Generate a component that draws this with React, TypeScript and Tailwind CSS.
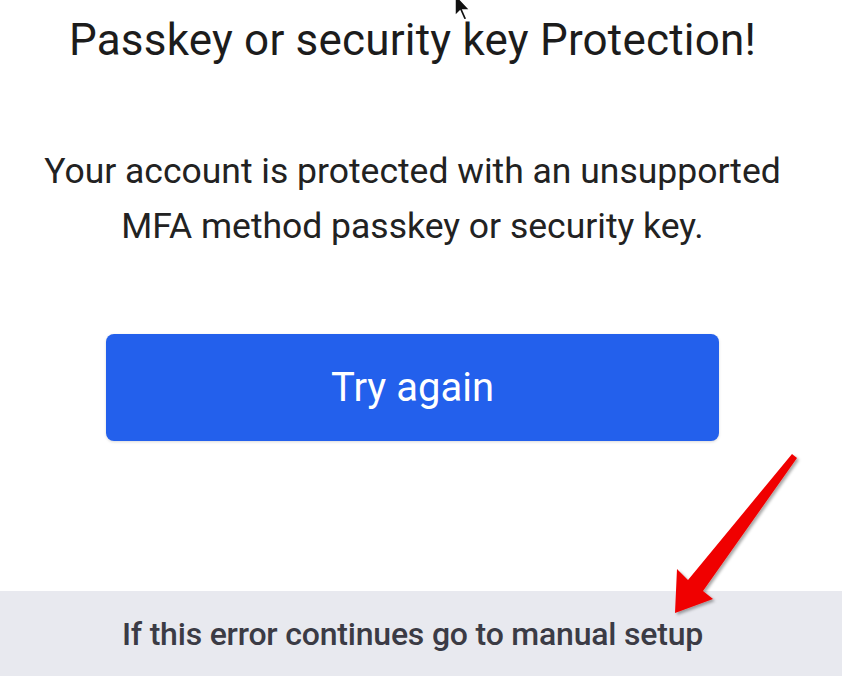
export default function App() {
  return (
    <div
      className="relative w-[842px] h-[676px] overflow-hidden bg-white flex flex-col"
      style={{ fontFamily: 'Roboto, "Liberation Sans", sans-serif' }}
    >
      <div className="flex-1 flex flex-col items-center pr-[17px]">
        <h1 className="mt-[12px] text-[44px] leading-[56px] text-[#1c1c1c] tracking-[0.2px]">
          Passkey or security key Protection!
        </h1>
        <p className="mt-[76px] text-center text-[35.5px] leading-[55px] text-[#222]">
          Your account is protected with an unsupported
          <br />
          MFA method passkey or security key.
        </p>
        <button className="mt-[80px] w-[613px] h-[107px] rounded-[8px] bg-[#2360ec] text-white text-[40px] shadow-[0_1px_3px_rgba(0,0,0,0.15)]">
          Try again
        </button>
      </div>
      <div className="h-[85px] bg-[#e8e9ef] flex items-center justify-center pr-[17px]">
        <span className="text-[32px] font-medium text-[#3b3b45] tracking-[-0.2px]">
          If this error continues go to manual setup
        </span>
      </div>

      {/* mouse cursor */}
      <svg className="absolute left-[452px] top-[-8px]" width="24" height="34" viewBox="0 0 24 34">
        <path d="M3 2 L3 24 L8 19 L12 28 L15 27 L11 18 L18 18 Z" fill="#111" stroke="#fff" strokeWidth="1.5" />
      </svg>

      {/* red arrow */}
      <svg className="absolute left-[660px] top-[445px]" width="150" height="180" viewBox="0 0 150 180">
        <defs>
          <filter id="sh" x="-20%" y="-20%" width="140%" height="140%">
            <feDropShadow dx="2" dy="2" stdDeviation="1.5" floodColor="#000" floodOpacity="0.35" />
          </filter>
        </defs>
        <path
          d="M132 9 L137 13 L43 146 L53 154 L15 168 L17 124 L28 135 Z"
          fill="#f00000"
          filter="url(#sh)"
        />
      </svg>
    </div>
  );
}
